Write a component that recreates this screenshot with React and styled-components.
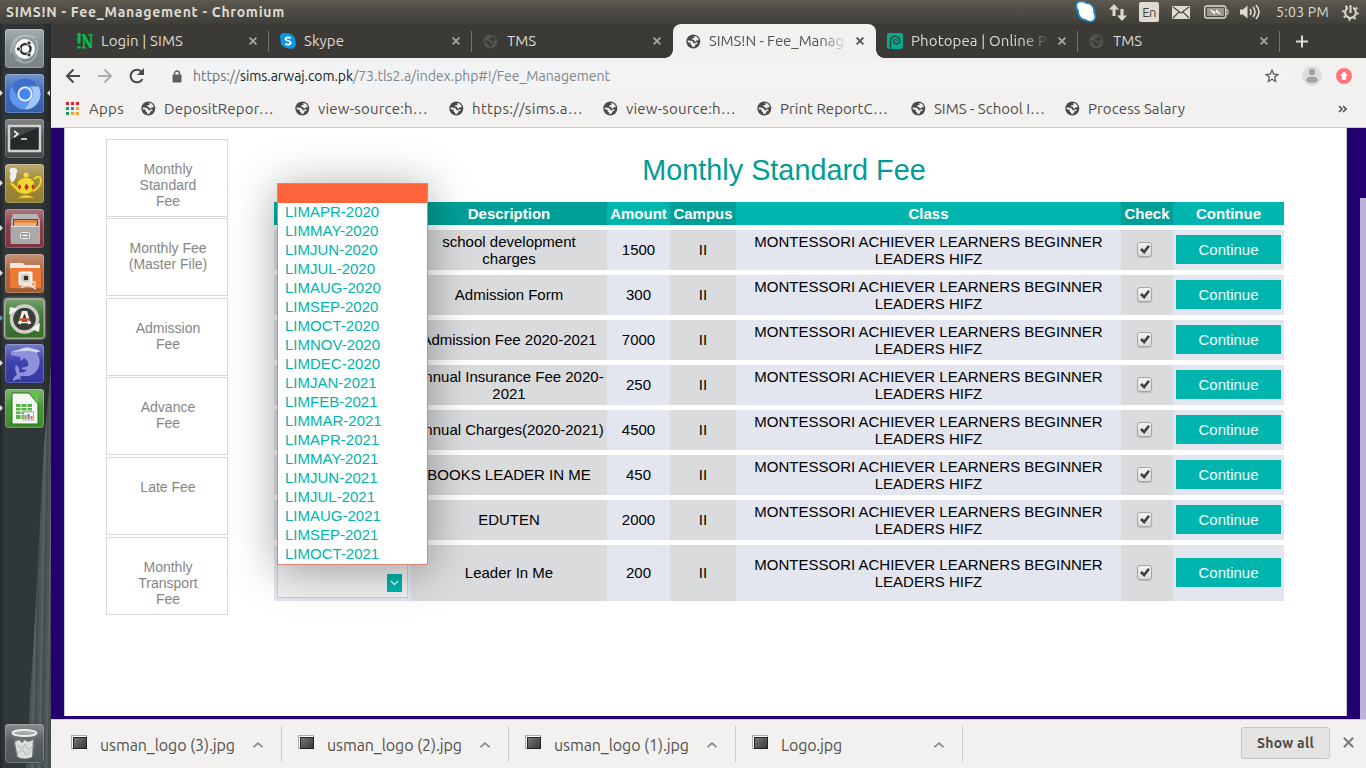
import React, { useLayoutEffect, useRef, useState } from "react";
import styled, { createGlobalStyle } from "styled-components";

const Global = createGlobalStyle`
  * { box-sizing: border-box; }
  body { margin: 0; overflow: hidden; background: #2e3436; }
  button { font: inherit; border: 0; padding: 0; }
  svg { display: block; flex: none; }
`;
const UI = `"Ubuntu", "Noto Sans", sans-serif`;

/* Tracks a label so that it fills its given width. */
const FitText = styled.span`
  display: block;
  flex: none;
  width: ${(p) => p.$w}px;
  white-space: nowrap;
  color: ${(p) => p.$color || "inherit"};
`;
function Fit({ w, color, children }) {
  const ref = useRef(null);
  const [space, setSpace] = useState(0);
  useLayoutEffect(() => {
    const natural = ref.current.getBoundingClientRect().width;
    setSpace((w - natural) / String(children).length);
  }, [w, children]);
  return (
    <FitText $w={w} $color={color}>
      <span ref={ref} style={{ letterSpacing: space }}>{children}</span>
    </FitText>
  );
}

const Screen = styled.div`
  width: 1366px; height: 768px; overflow: hidden;
  display: flex; flex-direction: column; font-family: ${UI};
`;
const TitleBar = styled.header`
  height: 24px; flex: none; display: flex; align-items: center;
  justify-content: space-between; padding: 0 7px 0 6px;
  background: linear-gradient(#5f5d50 0, #59564e 2px, #403e39 100%);
  color: #dfdbd2; font-size: 14px; line-height: 24px;
`;
const Strong = styled.div`font-weight: 700;`;
const Tray = styled.div`display: flex; align-items: center; height: 24px;`;
const Slot = styled.div`
  width: ${(p) => p.$w}px; flex: none; display: flex; align-items: center;
`;
const LangBadge = styled.div`
  width: 20px; height: 20px; border-radius: 2px; background: #dfdbd2; color: #45433e;
  font-size: 13px; line-height: 20px; text-align: center; letter-spacing: -.5px;
`;
const Body = styled.div`flex: 1; display: flex; min-height: 0;`;

const Dock = styled.nav`
  width: 51px; flex: none; position: relative;
  display: flex; flex-direction: column; gap: 6px; padding: 5px 0 5px 0;
  background: linear-gradient(90deg, #232829 0, #30373a 4px, #303739 42px, #242a2c 50px);
  &::before {
    content: ""; position: absolute; inset: 0;
    background: repeating-linear-gradient(91deg, #4d5557 0 2px, #596163 3px 4px, #454d50 5px 7px);
    clip-path: polygon(51px 340px, 51px 744px, 26px 744px, 36px 576px, 44px 420px);
  }
`;
const DockItem = styled.div`
  position: relative; height: 39px; padding-left: 5px; flex: none;
  margin-top: ${(p) => (p.$last ? "auto" : 0)};
  &::before {
    content: ""; display: ${(p) => (p.$run ? "block" : "none")};
    position: absolute; left: 0; top: 16px; border: 3px solid transparent;
    border-left-color: ${(p) => p.$run}; border-right: 0;
  }
  &::after {
    content: ""; display: ${(p) => (p.$focus ? "block" : "none")};
    position: absolute; right: 1px; top: 16px; border: 3px solid transparent;
    border-right-color: #ddd; border-left: 0;
  }
`;
const Tile = styled.div`
  width: 39px; height: 39px; border-radius: 3px; display: flex; align-items: center; justify-content: center;
  background: linear-gradient(rgba(255,255,255,.32), rgba(255,255,255,.04) 45%, rgba(0,0,0,.05)), ${(p) => p.$bg};
  box-shadow: inset 0 0 0 1px rgba(255,255,255,.22), 0 0 ${(p) => (p.$glow ? "2px 1px #d5cfbf" : "1px #111")};
`;

const Browser = styled.main`flex: 1; min-width: 0; display: flex; flex-direction: column;`;
const Tabs = styled.div`
  height: 34px; flex: none; display: flex; padding-left: 15px;
  background: #3c3a36; color: #dfdbd2; font-size: 15px;
`;
const TabBox = styled.div`
  position: relative; width: ${(p) => p.$w}px; height: 34px; flex: none;
  display: flex; align-items: center; padding: 0 12px 0 ${(p) => (p.$active ? 13 : 11)}px;
  background: ${(p) => (p.$active ? "#f2f1f0" : "transparent")};
  color: ${(p) => (p.$active ? "#55524d" : "#dfdbd2")};
  border-radius: 8px 8px 0 0;
  &::after {
    content: ""; display: ${(p) => (p.$line ? "block" : "none")};
    position: absolute; right: 0; top: 7px; width: 1px; height: 21px; background: #77756e;
  }
`;
const Flare = styled.i`
  position: absolute; bottom: 0; width: 8px; height: 8px;
  ${(p) => p.$side}: -8px;
  background: radial-gradient(circle at ${(p) => (p.$side === "left" ? "0" : "100%")} 0, transparent 7.5px, #f2f1f0 8px);
`;
const TabIcon = styled.div`width: ${(p) => (p.$active ? 23 : 24)}px; flex: none;`;
const TabLabel = styled.div`
  width: 139px; flex: none; line-height: 24px;
  ${(p) => p.$fade && "mask-image: linear-gradient(90deg, #000 80%, transparent 100%);"}
`;
const TabEnd = styled.div`margin-left: auto; color: ${(p) => p.$c};`;
const NewTab = styled.div`padding: 11px 0 0 15px;`;

const Toolbar = styled.div`
  height: 36px; flex: none; background: #f2f1f0; display: flex; align-items: center;
  padding: 0 14px 0 14px; font-size: 14px;
`;
const AddressBar = styled.div`
  width: 1129px; height: 28px; flex: none; border-radius: 14px; background: #f1f3f4;
  display: flex; align-items: center; padding: 0 11px 0 11px; color: #80868b;
`;
const Spacer = styled.div`flex: 1;`;
const Bookmarks = styled.div`
  height: 34px; flex: none; background: #f2f1f0; border-bottom: 1px solid #cfcdcb;
  display: flex; align-items: center; padding: 0 19px 4px 15px; color: #4f4c49; font-size: 15px; line-height: 24px;
`;
const Bookmark = styled.div`
  width: ${(p) => p.$w}px; flex: none; display: flex; align-items: center; gap: ${(p) => p.$gap}px;
`;

const Viewport = styled.section`
  height: 591px; flex: none; position: relative; background: #22006d; padding: 0 19px 3px 13px; display: flex;
`;
const ScrollThumb = styled.div`
  position: absolute; right: 0; top: 70px; width: 6px; bottom: 0; background: #bdb2d7;
`;
const Page = styled.div`
  width: 1283px; height: 588px; background: #fff; border: solid #c9c9c9; border-width: 0 1px;
  display: flex; align-items: flex-start; padding-left: 41px;
  font-family: "Liberation Sans", Arial, sans-serif;
`;
const SideMenu = styled.div`
  width: 122px; flex: none; padding-top: 10.6px; display: flex; flex-direction: column; gap: 1.6px;
`;
const SideItem = styled.div`
  height: 78px; border: 1px solid #d9d9d9; padding: 21px 10px 0 12px; text-align: center;
  font-size: 14px; line-height: 16px; color: #868686; white-space: pre-line;
`;
const Content = styled.div`width: 1010px; margin-left: 46px; flex: none;`;
const Heading = styled.h1`
  margin: 0; height: 74px; padding: 25px 0 0 10px; text-align: center; font-size: 28.8px; line-height: 34px;
  font-weight: 400; color: #009c95;
`;
const Table = styled.div`position: relative; display: flex; flex-direction: column; gap: 5px;`;
const Row = styled.div`
  display: grid; grid-template-columns: 137px 196px 63px 66px 385px 52px 111px;
  height: ${(p) => p.$h}px; font-size: 15px; line-height: 17px; text-align: center; color: #000;
`;
const Cell = styled.div`
  display: flex; align-items: center; justify-content: center; padding: 0 3px 1px; white-space: pre-line;
  background: #e3e6ee;
  &:nth-child(even) { background: #dadbdc; }
`;
const HeadCell = styled(Cell)`
  font-weight: 700; color: #fff; background: #00b5ad; padding-bottom: 0;
  &:nth-child(even) { background: #009f97; }
`;
const ContinueButton = styled.button`
  width: 105px; height: 29px; background: #00b5ad; color: #f2ffff;
`;
const Check = styled.div`
  width: 15px; height: 15px; margin-right: 6px; border: 1px solid #a5a5a5; border-radius: 3px; 
  background: linear-gradient(#f3f3f3, #dcdcdc); box-shadow: 0 1px 1px rgba(0,0,0,.15);
`;
const Select = styled.div`
  width: 131px; height: 50px; border: 1px solid #ccc; background: #f1f1f1; margin-top: 1px;
  display: flex; justify-content: flex-end; align-items: flex-end; padding: 0 5px 5px;
`;
const SelectArrow = styled.div`
  width: 15px; height: 18px; background: #00b5ad; display: flex; align-items: center; justify-content: center;
`;
const Menu = styled.div`
  position: absolute; z-index: 2; left: 3px; top: -19px; width: 151px; height: 382px;
  border: 1px solid #df8672; background: #fff; box-shadow: 0 5px 42px rgba(0,0,0,.37);
`;
const Option = styled.div`
  height: 19px; padding-left: 7px; font-size: 15px; line-height: 18px; color: #00b5ad;
  background: ${(p) => (p.$selected ? "#ff643b" : "transparent")};
`;

const Downloads = styled.footer`
  height: 49px; flex: none; background: #f2f1f0; border-top: 1px solid #d2cfd0;
  display: flex; align-items: center; padding-right: 12px; color: #55524d; font-size: 16px; line-height: 26px;
`;
const Download = styled.div`
  position: relative; width: ${(p) => p.$w}px; height: 36px; flex: none; border-right: 1px solid #cdcbc9;
  display: flex; align-items: center; padding: 1px 17px 0 ${(p) => p.$pad}px;
`;
const Thumb = styled.div`
  width: 16px; height: 14px; border: 1px solid #aaa; background: #fff; padding: 1px; margin: 0 13px 5px 0;
  &::before { content: ""; display: block; width: 12px; height: 10px; border: 1px solid #222; background: linear-gradient(135deg, #777, #3a3a3a); }
`;
const ShowAll = styled.button`
  width: 89px; height: 32px; border: 1px solid #c9c7c5; border-radius: 3px; background: #e5e4e2; color: #4c4a46;
  font-size: 14px; font-weight: 600; line-height: 30px; display: flex; justify-content: center; margin: 0 13px 2px 0;
`;
const CloseShelf = styled.div`color: #7d7b77; margin-bottom: 3px;`;

const Globe = ({ c = "#4b4b4b", hole = "#f2f1f0" }) => (
  <svg width="15" height="15" viewBox="0 0 15 15">
    <circle cx="7.3" cy="7.500" r="7" fill={c} />
    <path d="M7.600 1.900 10.500 2.600 12.700 5.100 12.500 6.300H10.700L9.900 7.500 8.300 7.200 8.100 5.800H6.200L6.300 4.300 8.400 4 8.600 3.100ZM1.700 6.600 5 6.700 6.900 7.800 7.600 9.200H9.300L10 8.300 11.400 8.600 11.500 9.600 9.400 10.600 8.800 12.600 6.200 13 6 11.200 4.700 10.500 4.500 8.700 1.800 8.300Z" fill={hole} />
  </svg>
);
const Cross = ({ s = 8, w = 1.8 }) => (
  <svg width={s} height={s} viewBox="0 0 8 8" fill="none" stroke="currentColor" strokeWidth={w}><path d="m.6.6 6.8 6.8m0-6.8L.6 7.4" /></svg>
);
const Caret = () => (
  <svg width="12" height="8" fill="none" stroke="#8b8986" strokeWidth="1.8"><path d="m1.5 6.2 4.5-4 4.5 4" /></svg>
);
const LoginMark = () => (
  <svg width="17" height="16" fill="none" stroke="#05bd49">
    <path d="M2 0v10.5M2 13v2.500" strokeWidth="3" /><path d="M4.500 2h4M4.500 14.800h4.500M11.500 2h4.500" strokeWidth="1.6" /><path d="M6.800 2V15M14 2V15" strokeWidth="1.7" /><path d="m6.500 2 7.200 12.500" strokeWidth="2.7" />
  </svg>
);
const SkypeMark = () => (
  <svg width="16" height="16"><path d="M1 1C3-.5 6 0 6.500.4A7.600 7.600 0 0 1 15.300 8.700C16 10 16.200 13 14.500 14.700 13 16.200 10 16 8.800 15.300A7.600 7.600 0 0 1 .6 6.500C-.2 4.500 0 2 1 1Z" fill="#0896e8" /><path d="M10.700 5.200C9.500 4.200 5.600 3.700 5.500 6c0 2.200 5.200 1.300 5.200 3.700 0 2.500-4 2.200-5.500 1" fill="none" stroke="#fff" strokeWidth="1.800" /></svg>
);
const PeaMark = () => (
  <svg width="16" height="16" fill="none"><rect width="16" height="16" rx="2" fill="#08aa92" /><path d="M3.500 16V8c0-6.500 9.500-6 9.300-.2C12.500 12 7 12 6.800 8.500 6.700 6 10 5.800 9.800 8" stroke="#30463f" strokeWidth="1.500" /></svg>
);

const dock = [
  { bg: "#7e8a8c", icon: <svg width="36" height="36" fill="none"><path d="M4 22C3 5 18 2 28 7M8 28C25 39 34 22 29 9M12 7C4 13 5 25 15 30" stroke="#fff" strokeOpacity=".28" strokeWidth="2" /><circle cx="18" cy="18" r="10" fill="#fff" /><circle cx="18.500" cy="18" r="5" stroke="#303639" strokeWidth="2.500" /><g fill="#303639" stroke="#fff" strokeWidth=".8"><circle cx="11.500" cy="18" r="2.100" /><circle cx="22" cy="12" r="2.100" /><circle cx="22" cy="24" r="2.100" /></g></svg> },
  { bg: "#3764b5", run: "#ddd", focus: true, icon: <svg width="34" height="34"><circle cx="17" cy="17" r="15.500" fill="#5f97ef" /><path d="M3.600 9.200A15.500 15.500 0 0 1 30.500 9.500H17a8 8 0 0 0-7 11Z" fill="#3e6fc9" /><path d="M30.500 9.500A15.500 15.500 0 0 1 17 32.500l7-12a8 8 0 0 0-2-11Z" fill="#a5c6fb" /><circle cx="17" cy="17" r="7.500" fill="#e9f2ff" /><circle cx="17" cy="17" r="5.700" fill="#4485ef" /></svg> },
  { bg: "#4b4c4c", icon: <svg width="35" height="31" fill="none"><rect x="2" y="3" width="31" height="25" fill="#252929" stroke="#d1d1d1" strokeWidth="2.500" /><path d="m3 4 29 0-29 13Z" fill="#777" fillOpacity=".4" /><path d="m7 8 4 3-4 3M14 16h6" stroke="#eee" strokeWidth="1.600" /></svg> },
  { bg: "#9b8432", run: "#ddd", icon: <svg width="36" height="36" fill="none"><path d="M4 16C3 12 2 10 4 8 1 5 3 1 7 2c4 0 4 4 2 6 1 3-1 5-3 8Z" fill="#eee" /><path d="M27 13c9-8 10 8-1 12" stroke="#ecd02d" strokeWidth="2" /><path d="m2 17 4 0 4 4 1-6q8-5 16 0v8c-2 6-14 7-18 1Z" fill="#f0d92f" stroke="#bd9818" strokeWidth=".7" /><path d="M12 14q7-5 14 0M11 32q8-6 16 0Z" fill="#f5dc4a" stroke="#c39b18" /><circle cx="19" cy="9" r="2.500" fill="#f5dc4a" /><path d="m12.500 18 1.700 3-1.700 3-1.700-3Zm7-.5 2.200 3.500-2.200 3.500-2.200-3.500Zm6.500.5 1.700 3-1.700 3-1.700-3Z" fill="#c02d24" /></svg> },
  { bg: "#873544", run: "#ddd", icon: <svg width="34" height="36"><path d="M5 3h24l3 6v24H3V9Z" fill="#b5b5b5" /><path d="M5 8h25v9H5Z" fill="#5a4a3e" /><path d="M6 9h23v5H6Z" fill="#df8a43" /><path d="M6 12h22v5H6Z" fill="#e8b17d" /><path d="M2.500 15h29v16q0 2-2 2h-25q-2 0-2-2Z" fill="#a9a9a8" /><path d="M3 15.500h28" stroke="#dedede" /><rect x="12.500" y="21.500" width="9" height="6" rx="1" fill="#999" stroke="#eee" /><path d="M14.500 24.500h5" stroke="#fff" strokeWidth="1.500" /></svg> },
  { bg: "#aa6137", run: "#ddd", icon: <svg width="35" height="36"><path d="M3 7h13l2 2h15v8H3Z" fill="#f3e7de" /><rect x="3" y="12" width="31" height="20" rx="1" fill="#ee7836" /><rect x="12" y="16" width="13" height="13" rx="1" fill="#ece8dd" stroke="#fff" /><circle cx="18.500" cy="22" r="4" fill="#c6c3b5" /><path d="M17 20h4v4h-4Z" fill="#333" /><path d="M14 32q7-5 15 1M23 26h5v4h-5Z" stroke="#f0e0d2" strokeWidth="1.300" fill="none" /></svg> },
  { bg: "#38732d", run: "#5e9ca8", glow: true, icon: <svg width="35" height="36" fill="none"><circle cx="17.500" cy="18" r="13" fill="#3d3e3b" stroke="#cfcfc9" strokeWidth="3.500" /><path d="m2 14 1-8 8 2ZM33 22l-1 9-8-3Z" fill="#f2f2ee" /><path d="M12.500 23 16 11.500h3L22.500 23" stroke="#f2f2ee" strokeWidth="2.800" /><path d="M12 18.500h11" stroke="#d95327" strokeWidth="2.500" /><path d="M11 21.500h13" stroke="#f2f2ee" strokeWidth="1.500" /></svg> },
  { bg: "#363bA8", run: "#ddd", icon: <svg width="36" height="36"><path d="M4 5.500C8 4 11 4.500 14 3c4-2 8-2 11-.5 3 .5 6 1 8.500 3-2 0-3 .5-4 1.500 3 4 4 8 2.500 13-2 7-8 11-15 10-3 0-3 0-4 1l1 3-3-1-5 2c0-4 3-5 4-7-1-2-3-5-1-9 3 2 4 4 3 7 3 1 6 0 8-2-2 0-4 0-6-2 3-1 5-1 7-2 1-4-1-6-4-8l-3 3c-1-2-1-3 0-4-4-1-8-1-10-2Z" fill="#8f91dc" /><path d="M4 5.500C8 4 11 4.500 14 3c4-2 8-2 11-.5 3 .5 6 1 8.500 3-2 0-3 .5-4 1.500C22 3 17 6 4 5.500Z" fill="#cbd5ec" /></svg> },
  { bg: "#43932f", run: "#ddd", icon: <svg width="36" height="37"><path d="M5 3h17l9 11v20H5Z" fill="#f3f7f1" stroke="#276f21" /><path d="M22 2h9v12Z" fill="#5fc34c" /><path d="M9 14h16v15H9Z" fill="#5bb149" /><path d="M9 17.500h16M9 21h16M9 24.500h16M14 14v15M20 14v15" stroke="#eef8e9" /><rect x="16.500" y="22" width="10" height="8" fill="#f6f6f3" stroke="#aaa" /><path d="M18.500 25v4M24.500 26v3" stroke="#e57436" strokeWidth="2" /><path d="M21.500 24v5" stroke="#388fc9" strokeWidth="2" /></svg> },
];
const tabs = [
  { icon: <LoginMark />, text: "Login | SIMS", w: 203, tw: 82, line: true },
  { icon: <SkypeMark />, text: "Skype", w: 203, tw: 40, line: true },
  { icon: <Globe c="#555452" hole="#3c3a36" />, text: "TMS", w: 201, tw: 29 },
  { icon: <Globe />, text: "SIMS!N - Fee_Manag", w: 203, tw: 135, active: true, fade: true },
  { icon: <PeaMark />, text: "Photopea | Online P", w: 202, tw: 136, line: true, fade: true },
  { icon: <Globe c="#555452" hole="#3c3a36" />, text: "TMS", w: 202, tw: 29, line: true },
];
const bookmarks = [["DepositRepor…", 110], ["view-source:h…", 110], ["https://sims.a…", 111], ["view-source:h…", 110], ["Print ReportC…", 108], ["SIMS - School I…", 111], ["Process Salary", 97]];
const side = ["Monthly\nStandard\nFee", "Monthly Fee\n(Master File)", "Admission\nFee", "Advance\nFee", "Late Fee", "Monthly\nTransport\nFee"];
const months = ["", ...["APR", "MAY", "JUN", "JUL", "AUG", "SEP", "OCT", "NOV", "DEC"].map((m) => `LIM${m}-2020`), ...["JAN", "FEB", "MAR", "APR", "MAY", "JUN", "JUL", "AUG", "SEP", "OCT"].map((m) => `LIM${m}-2021`)];
const fees = [["school development\ncharges", 1500], ["Admission Form", 300], ["Admission Fee 2020-2021", 7000], ["Annual Insurance Fee 2020-\n2021", 250], ["Annual Charges(2020-2021)", 4500], ["BOOKS LEADER IN ME", 450], ["EDUTEN", 2000], ["Leader In Me", 200]];
const files = [["usman_logo (3).jpg", 135], ["usman_logo (2).jpg", 135], ["usman_logo (1).jpg", 135], ["Logo.jpg", 61]];
const appColors = ["#ea1c2c", "#ea1c2c", "#ea1c2c", "#16a45b", "#2583e8", "#f4a11b", "#16a45b", "#f4a11b", "#f4a11b"];

export default function App() {
  return (
    <Screen>
      <Global />
      <TitleBar>
        <Strong><Fit w={279}>SIMS!N - Fee_Management - Chromium</Fit></Strong>
        <Tray>
          <Slot $w={34}><svg width="22" height="24"><path d="M2 3C5 0 10 2 11 3c5 0 9 4 8 9 2 4 2 7-1 9-3 1-6 0-7-1-5 0-8-4-8-9C1 8 1 5 2 3Z" fill="#fff" stroke="#168acb" strokeWidth="1.700" /></svg></Slot>
          <Slot $w={30}><svg width="18" height="17" fill="#dfdbd2"><path d="M5 0 10 5.500H6.500V12H3.500V5.500H0ZM13 17 8 11.500h3.500V5h3v6.500H18Z" /></svg></Slot>
          <Slot $w={33}><LangBadge>En</LangBadge></Slot>
          <Slot $w={32}><svg width="18" height="13"><rect width="18" height="13" rx="1" fill="#dfdbd2" /><path d="m1 1 8 6 8-6M1 12l6-6m10 6-6-6" fill="none" stroke="#4b4944" strokeWidth="1.200" /></svg></Slot>
          <Slot $w={36}><svg width="25" height="14"><rect x=".7" y="1" width="21" height="12" rx="2" fill="none" stroke="#dfdbd2" strokeWidth="1.400" /><rect x="3" y="3" width="17" height="8" fill="#98958d" /><path d="M22 5h2v4h-2" fill="none" stroke="#dfdbd2" /><path d="m5 4 7 3V4l6 6-7-3v3Z" fill="#f5f3ee" /></svg></Slot>
          <Slot $w={36}><svg width="21" height="16" fill="none" stroke="#dfdbd2" strokeWidth="1.600"><path d="M0 5.500h3l4.500-4v13l-4.500-4H0Z" fill="#dfdbd2" stroke="none" /><path d="M10 5q2 3 0 6M13 3q4 5 0 10M16 1q6 7 0 14" /></svg></Slot>
          <Slot $w={66}><Fit w={53}>5:03 PM</Fit></Slot>
          <svg width="17" height="17" fill="none" stroke="#dfdbd2"><circle cx="8.500" cy="8.500" r="5.400" strokeWidth="2" /><circle cx="8.500" cy="8.500" r="7.300" strokeWidth="2" strokeDasharray="2 3.730" /><path d="M8.500 0v9" stroke="#4c4a44" strokeWidth="5" /><path d="M8.500 1v8" strokeWidth="2" /></svg>
        </Tray>
      </TitleBar>
      <Body>
        <Dock>
          {dock.map((d, i) => <DockItem key={i} $run={d.run} $focus={d.focus}><Tile $bg={d.bg} $glow={d.glow}>{d.icon}</Tile></DockItem>)}
          <DockItem $last><Tile $bg="#52595b"><svg width="31" height="34"><path d="m4 8 3 22q8 4 17 0l3-22Z" fill="#6c7273" /><path d="m6 15 4-2 3 3 3-3 3 2 5-2-1 17q-7 3-14 0l-2-9Z" fill="#dcdedb" /><path d="m8 18 5 4 3-5 3 6 5-4M9 26l5-3 3 5 5-4" stroke="#b4b7b5" fill="none" /><ellipse cx="15.500" cy="6" rx="12" ry="3" fill="#a6a9a9" stroke="#eee" strokeWidth="1.800" /></svg></Tile></DockItem>
        </Dock>
        <Browser>
          <Tabs>
            {tabs.map((t, i) => (
              <TabBox key={i} $w={t.w} $line={t.line} $active={t.active}>
                {t.active && <><Flare $side="left" /><Flare $side="right" /></>}
                <TabIcon $active={t.active}>{t.icon}</TabIcon>
                <TabLabel $fade={t.fade}><Fit w={t.tw}>{t.text}</Fit></TabLabel>
                <TabEnd $c={t.active ? "#55524d" : "#aaa8a0"}><Cross /></TabEnd>
              </TabBox>
            ))}
            <NewTab><svg width="14" height="13" stroke="#dfdbd2" strokeWidth="2"><path d="M7 .5v12M1 6.500h12" /></svg></NewTab>
          </Tabs>
          <Toolbar>
            <Slot $w={32}><svg width="16" height="16" fill="none" stroke="#4b4a48" strokeWidth="2"><path d="M15 8H2M8.500 1.500 2 8l6.500 6.500" /></svg></Slot>
            <Slot $w={32}><svg width="16" height="16" fill="none" stroke="#b0afad" strokeWidth="2"><path d="M1 8h13M7.500 1.500 14 8l-6.500 6.500" /></svg></Slot>
            <Slot $w={32}><svg width="16" height="16" fill="none" stroke="#4b4a48" strokeWidth="2"><path d="M13.500 11A6.300 6.300 0 1 1 12.800 4" /><path d="M15 0v7H8Z" fill="#4b4a48" stroke="none" /></svg></Slot>
            <AddressBar>
              <Slot $w={21}><svg width="10" height="13"><path d="M2.500 5V3.500a2.500 2.500 0 0 1 5 0V5" fill="none" stroke="#5b6064" strokeWidth="1.400" /><rect x=".5" y="4.500" width="9" height="8" rx="1" fill="#5b6064" /></svg></Slot>
              <Fit w={47} color="#6d7277">https://</Fit><Fit w={113} color="#202124">sims.arwaj.com.pk</Fit><Fit w={257}>/73.tls2.a/index.php#!/Fee_Management</Fit>
              <Spacer />
              <svg width="14" height="14" fill="none" stroke="#5b6064" strokeWidth="1.300"><path d="m7 1.200 1.700 3.900 4.200.4-3.200 2.800 1 4.200L7 10.300l-3.700 2.200 1-4.200L1.100 5.500l4.200-.4Z" /></svg>
            </AddressBar>
            <Spacer />
            <Slot $w={34}><svg width="20" height="20"><circle cx="10" cy="10" r="10" fill="#dedddc" /><circle cx="10" cy="6" r="3.200" fill="#a3a2a0" /><ellipse cx="10" cy="13.700" rx="6" ry="3.100" fill="#a3a2a0" /></svg></Slot>
            <svg width="16" height="16"><circle cx="8" cy="8" r="8" fill="#ff777c" /><path d="m8 3.500 4.200 4.500H10v3.700H6V8H3.800Z" fill="#fff" /></svg>
          </Toolbar>
          <Bookmarks>
            <Bookmark $w={75} $gap={9}><svg width="14" height="14">{appColors.map((c, i) => <rect key={i} x={(i % 3) * 5} y={Math.floor(i / 3) * 5} width="3" height="3" fill={c} />)}</svg><Fit w={35}>Apps</Fit></Bookmark>
            {bookmarks.map(([s, w], i) => <Bookmark key={i} $w={154} $gap={8}><Globe /><Fit w={w}>{s}</Fit></Bookmark>)}
            <Spacer />
            <svg width="9" height="8" fill="none" stroke="#55524d" strokeWidth="1.600"><path d="m1 1 3 3-3 3m4-6 3 3-3 3" /></svg>
          </Bookmarks>
          <Viewport>
            <Page>
              <SideMenu>{side.map((s) => <SideItem key={s}>{s}</SideItem>)}</SideMenu>
              <Content>
                <Heading>Monthly Standard Fee</Heading>
                <Table>
                  <Row $h={23}>{["", "Description", "Amount", "Campus", "Class", "Check", "Continue"].map((h, i) => <HeadCell key={i}>{h}</HeadCell>)}</Row>
                  {fees.map(([name, amount], i) => (
                    <Row key={name} $h={i === 7 ? 56 : 40}>
                      <Cell>{i === 7 && <Select><SelectArrow><svg width="9" height="6" fill="none" stroke="#fff" strokeWidth="1.200"><path d="m.8 1 3.700 3.500L8.200 1" /></svg></SelectArrow></Select>}</Cell>
                      <Cell>{name}</Cell><Cell>{amount}</Cell><Cell>II</Cell>
                      <Cell>{"MONTESSORI ACHIEVER LEARNERS BEGINNER\nLEADERS HIFZ"}</Cell>
                      <Cell><Check><svg width="13" height="13"><path d="m2 7 2-2 2 2 4-5 2 1.500L6.300 11Z" fill="#3f3f3f" /></svg></Check></Cell>
                      <Cell><ContinueButton>Continue</ContinueButton></Cell>
                    </Row>
                  ))}
                  <Menu>{months.map((m, i) => <Option key={i} $selected={i === 0}>{m}</Option>)}</Menu>
                </Table>
              </Content>
            </Page>
            <ScrollThumb />
          </Viewport>
          <Downloads>
            {files.map(([s, w], i) => <Download key={s} $w={i === 0 ? 231 : 227} $pad={i === 0 ? 20 : 16}><Thumb /><Fit w={w}>{s}</Fit><Spacer /><Caret /></Download>)}
            <Spacer />
            <ShowAll><Fit w={57}>Show all</Fit></ShowAll>
            <CloseShelf><Cross s={11} w={1.5} /></CloseShelf>
          </Downloads>
        </Browser>
      </Body>
    </Screen>
  );
}
